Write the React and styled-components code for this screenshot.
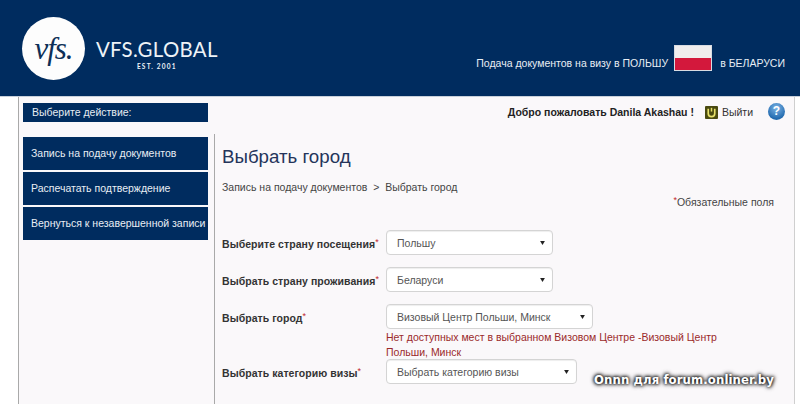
import React from "react";
import styled, { createGlobalStyle } from "styled-components";

const Global = createGlobalStyle`
  html, body { margin: 0; padding: 0; background: #fff; overflow: hidden; }
  body { font-family: "Liberation Sans", Arial, sans-serif; color: #333; }
`;
const Page = styled.div`
  position: relative;
  width: 800px;
  height: 404px;
  overflow: hidden;
`;
const Header = styled.header`
  height: 96px;
  background: #002c5f;
  display: flex;
  justify-content: space-between;
  border-bottom: 1px solid #c8d0da;
`;
const Brand = styled.div`
  display: flex;
  align-items: center;
  padding: 16px 0 16px 22px;
  gap: 11px;
`;
const Circle = styled.div`
  width: 63px;
  height: 63px;
  border-radius: 50%;
  background: #fdfdfd;
  color: #0d2f57;
  display: flex;
  align-items: center;
  justify-content: center;
  font: italic 31px/1 "Liberation Serif", serif;
  letter-spacing: -1px;
`;
const Wordmark = styled.div`
  display: flex;
  flex-direction: column;
  align-items: center;
  color: #eef3f7;
  margin-top: 12px;
`;
const WordTop = styled.div`
  font: 400 20.4px/22px Lato, sans-serif;
  letter-spacing: 0.3px;
`;
const WordEst = styled.div`
  font: 700 6.5px/9px Lato, sans-serif;
  letter-spacing: 1.2px;
  margin-top: 2px;
`;
const Tagline = styled.div`
  display: flex;
  align-items: flex-start;
  margin-top: 45px;
  padding-right: 15px;
  color: #e8eef4;
  font-size: 10.5px;
  gap: 6px;
`;
const TagText = styled.span`
  line-height: 14px;
  margin-top: 11px;
`;
const Flag = styled.div`
  width: 38px;
  height: 26px;
  box-sizing: border-box;
  border: 1px solid #d8dce2;
  display: flex;
  flex-direction: column;
  margin-right: 2px;
`;
const FlagStripe = styled.div`
  flex: 1;
  background: ${(p) => p.$c};
`;
const Shell = styled.div`
  margin: 0 5px 0 18px;
  height: 307px;
  background: #faf8fa;
  border-left: 1px solid #a9a9a9;
  border-right: 1px solid #cfcfcf;
  display: flex;
  flex-direction: column;
`;
const TopRow = styled.div`
  display: flex;
  justify-content: space-between;
  padding: 6px 9px 0 4px;
  height: 31px;
  box-sizing: border-box;
`;
const ActionTitle = styled.div`
  width: 185px;
  height: 19px;
  background: #002c5f;
  color: #e6ecf2;
  font-size: 10.5px;
  line-height: 19px;
  padding-left: 9px;
  box-sizing: border-box;
`;
const Welcome = styled.div`
  display: flex;
  align-items: flex-start;
  font-size: 10.5px;
  line-height: 18px;
  color: #222;
`;
const WelcomeName = styled.b`
  letter-spacing: 0;
`;
const LogoutIcon = styled.svg`
  width: 13px;
  height: 13px;
  margin: 3px 4px 0 11px;
`;
const LogoutText = styled.span`
  color: #333;
`;
const HelpIcon = styled.div`
  width: 17px;
  height: 17px;
  margin: 0 0 0 15px;
  border-radius: 50%;
  background: radial-gradient(circle at 50% 30%, #7db4e6, #1f68ad 75%);
  color: #fff;
  font: 700 12px/17px "Liberation Sans", sans-serif;
  text-align: center;
`;
const Columns = styled.div`
  display: flex;
  flex: 1;
  padding-left: 4px;
`;
const Sidebar = styled.nav`
  width: 185px;
  padding-top: 9px;
  display: flex;
  flex-direction: column;
  gap: 2px;
  margin-right: 6px;
`;
const NavItem = styled.div`
  height: 33px;
  background: #002c5f;
  color: #e8eef4;
  font-size: 10.5px;
  line-height: 33px;
  padding-left: 8px;
  white-space: nowrap;
  overflow: hidden;
`;
const Main = styled.main`
  flex: 1;
  border-left: 1px solid #a9a9a9;
  padding: 10px 20px 0 7px;
  margin-top: 6px;
`;
const Title = styled.h1`
  margin: 0;
  font: 400 18.7px/26px "Liberation Sans", sans-serif;
  color: #24345a;
`;
const Crumbs = styled.div`
  margin-top: 10px;
  font-size: 10.5px;
  line-height: 14px;
  color: #444;
`;
const Required = styled.div`
  margin-top: 1px;
  text-align: right;
  font-size: 10.5px;
  line-height: 14px;
  color: #444;
`;
const Star = styled.span`
  color: #c0272d;
  font-size: 9px;
  vertical-align: 3px;
  line-height: 0;
  font-weight: 400;
`;
const Form = styled.div`
  margin-top: 21px;
  display: flex;
  flex-direction: column;
`;
const Row = styled.div`
  display: grid;
  grid-template-columns: 164px 1fr;
  margin-bottom: ${(p) => p.$gap}px;
`;
const Label = styled.div`
  font-size: 10.5px;
  font-weight: 700;
  letter-spacing: 0.05px;
  line-height: 14px;
  padding-top: 7px;
  color: #333;
  white-space: nowrap;
`;
const SelectBox = styled.div`
  width: ${(p) => p.$w}px;
  height: 25px;
  box-sizing: border-box;
  background: #fff;
  border: 1px solid #d4d4d4;
  border-radius: 4px;
  box-shadow: inset 0 1px 1px rgba(0, 0, 0, 0.07);
  display: flex;
  align-items: center;
  justify-content: space-between;
  padding: 0 7px 0 10px;
  font-size: 10.5px;
  color: #555;
`;
const Caret = styled.svg`
  width: 5px;
  height: 4px;
`;
const ErrorText = styled.div`
  width: 340px;
  margin-top: 1px;
  font-size: 10.5px;
  line-height: 14.5px;
  color: #9b2a2a;
`;
const Watermark = styled.div`
  position: absolute;
  left: 594px;
  top: 373px;
  font: 700 11.7px/14px "DejaVu Sans", sans-serif;
  color: #fff;
  letter-spacing: 0.1px;
  text-shadow: 0 0 3px #000, 0 0 4px #000, 0 0 5px #555;
`;

const Select = ({ w, children }) => (
  <SelectBox $w={w}>
    {children}
    <Caret viewBox="0 0 6 5"><path d="M0 0h6L3 5z" fill="#222" /></Caret>
  </SelectBox>
);

export default function App() {
  return (
    <Page>
      <Global />
      <Header>
        <Brand>
          <Circle>vfs.</Circle>
          <Wordmark>
            <WordTop>VFS.GLOBAL</WordTop>
            <WordEst>EST. 2001</WordEst>
          </Wordmark>
        </Brand>
        <Tagline>
          <TagText>Подача документов на визу в ПОЛЬШУ</TagText>
          <Flag>
            <FlagStripe $c="#f0eeee" />
            <FlagStripe $c="#d3183c" />
          </Flag>
          <TagText>в БЕЛАРУСИ</TagText>
        </Tagline>
      </Header>
      <Shell>
        <TopRow>
          <ActionTitle>Выберите действие:</ActionTitle>
          <Welcome>
            <WelcomeName>Добро пожаловать Danila Akashau !</WelcomeName>
            <LogoutIcon viewBox="0 0 14 14">
              <rect width="14" height="14" rx="1" fill="#4a4a10" />
              <path d="M3.5 3v5a3.5 3.5 0 0 0 7 0V3" fill="none" stroke="#e8e26a" strokeWidth="1.8" />
              <path d="M7 2v4" stroke="#e8e26a" strokeWidth="1.6" />
            </LogoutIcon>
            <LogoutText>Выйти</LogoutText>
            <HelpIcon>?</HelpIcon>
          </Welcome>
        </TopRow>
        <Columns>
          <Sidebar>
            <NavItem>Запись на подачу документов</NavItem>
            <NavItem>Распечатать подтверждение</NavItem>
            <NavItem>Вернуться к незавершенной записи</NavItem>
          </Sidebar>
          <Main>
            <Title>Выбрать город</Title>
            <Crumbs>Запись на подачу документов &nbsp;&gt;&nbsp; Выбрать город</Crumbs>
            <Required><Star>*</Star>Обязательные поля</Required>
            <Form>
              <Row $gap={12}>
                <Label>Выберите страну посещения<Star>*</Star></Label>
                <Select w={167}>Польшу</Select>
              </Row>
              <Row $gap={12}>
                <Label>Выбрать страну проживания<Star>*</Star></Label>
                <Select w={167}>Беларуси</Select>
              </Row>
              <Row $gap={0}>
                <Label>Выбрать город<Star>*</Star></Label>
                <div>
                  <Select w={207}>Визовый Центр Польши, Минск</Select>
                  <ErrorText>Нет доступных мест в выбранном Визовом Центре -Визовый Центр Польши, Минск</ErrorText>
                </div>
              </Row>
              <Row $gap={0}>
                <Label>Выбрать категорию визы<Star>*</Star></Label>
                <Select w={191}>Выбрать категорию визы</Select>
              </Row>
            </Form>
          </Main>
        </Columns>
      </Shell>
      <Watermark>Onnn для forum.onliner.by</Watermark>
    </Page>
  );
}
